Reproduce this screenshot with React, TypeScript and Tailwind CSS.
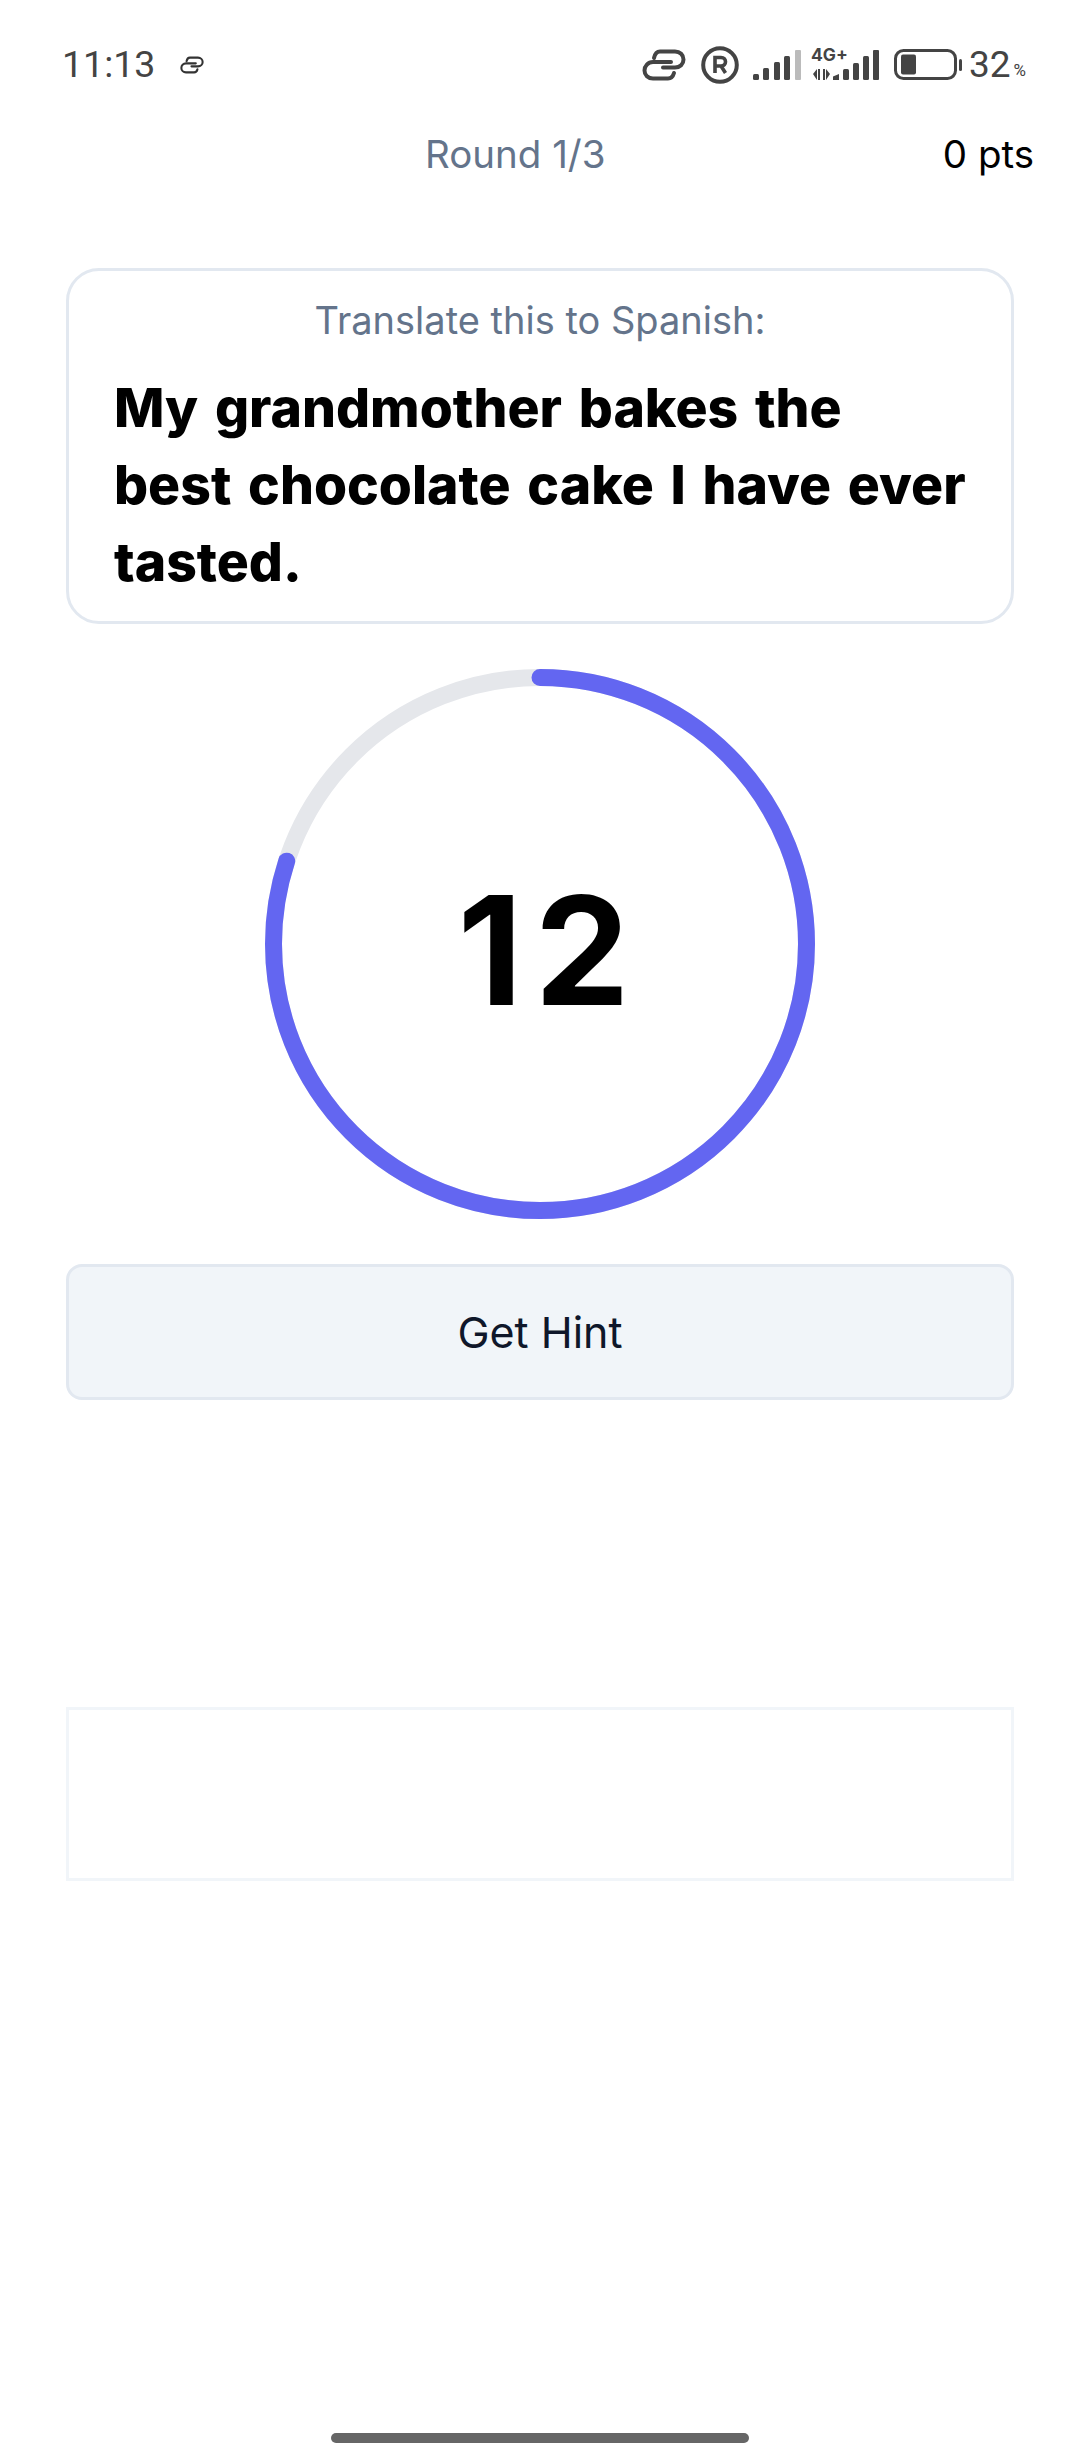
const linkTop = "M12 9 C13 4.5 15 2.5 18 2.5 H33 C38 2.5 41.5 6 41.5 10.5 C41.5 15 38 18.5 33 18.5 H21";
const linkBottom = "M29 13 H11 C6 13 2.5 17 2.5 21.5 C2.5 26 6 29.5 11 29.5 H26 C29 29.5 31 27.5 32 24";

export default function App() {
  return (
    <div className="w-[1080px] h-[2460px] bg-white flex flex-col overflow-hidden font-['Inter',sans-serif]">
      <div className="h-[112px] shrink-0 flex items-center pt-[17px] pl-[62px] pr-[54px] text-[#444444] font-['Roboto',sans-serif]">
        <span className="text-[37.5px] leading-none">11:13</span>
        <svg className="ml-[25px]" width="24" height="18" viewBox="0 0 44 32" fill="none" stroke="#333333" strokeWidth="3.8" strokeLinecap="round">
          <path d={linkTop} />
          <path d={linkBottom} />
        </svg>
        <div className="ml-auto flex items-center">
          <svg width="44" height="32" viewBox="0 0 44 32" fill="none" stroke="#444444" strokeWidth="4" strokeLinecap="round">
            <path d={linkTop} />
            <path d={linkBottom} />
          </svg>
          <svg className="ml-[15px]" width="38" height="38" viewBox="0 0 38 38" fill="none" stroke="#444444">
            <circle cx="19" cy="19" r="16.8" strokeWidth="4" />
            <path d="M14 27 V11.5 H20 C26 11.5 26 20 20 20 H14 M20 20 L24.5 27" strokeWidth="3.6" />
          </svg>
          <svg className="ml-[14px]" width="48" height="30" viewBox="0 0 48 30" fill="#444444">
            <rect x="0" y="24" width="6" height="6" rx="1.5" />
            <rect x="10" y="18" width="6" height="12" rx="1.5" />
            <rect x="21" y="12" width="6" height="18" rx="1.5" />
            <rect x="31" y="6" width="6" height="24" rx="1.5" />
            <rect x="42" y="0" width="6" height="30" rx="1" fill="#bbbbbb" />
          </svg>
          <div className="ml-[10px] relative w-[68px] h-[32px]">
            <span className="absolute left-0 top-[-4px] text-[17.5px] leading-[20px] font-bold font-['Inter',sans-serif]">4G+</span>
            <svg className="absolute left-0 top-0" width="68" height="32" viewBox="0 0 68 32" fill="#444444">
              <path d="M2 25 L6 20 V31 Z M7 20 H9 V31 H7 Z M12 20 H14 V31 H12 Z M15 20 L19 25 L15 31 Z" />
              <path d="M22 31 V27.5 L28 25 V31 Z" />
              <rect x="32" y="20" width="6" height="11" rx="1.5" />
              <rect x="42" y="14" width="6" height="17" rx="1.5" />
              <rect x="52" y="7" width="6" height="24" rx="1.5" />
              <rect x="62" y="1" width="6" height="30" rx="1" />
            </svg>
          </div>
          <svg className="ml-[15px]" width="68" height="32" viewBox="0 0 68 32" fill="none">
            <rect x="1.5" y="1.5" width="60" height="28" rx="8" stroke="#444444" strokeWidth="3" />
            <rect x="7" y="5.5" width="15" height="20" rx="2" fill="#444444" />
            <rect x="65" y="10" width="3" height="12" rx="1.5" fill="#444444" />
          </svg>
          <span className="ml-[7px] text-[37px] leading-none">32</span>
          <span className="ml-[3px] mt-[12px] text-[17px] leading-none">%</span>
        </div>
      </div>

      <div className="h-[84px] shrink-0 flex items-center pl-[425px] pr-[46px] text-[38.5px] leading-none">
        <span className="text-[#64748b]">Round 1/3</span>
        <span className="ml-auto text-black">0 pts</span>
      </div>

      <div className="mt-[72px] mx-[66px] w-[948px] h-[356px] shrink-0 rounded-[33px] border-[3px] border-[#e2e8f0] flex flex-col pl-[45px] pr-[40px]">
        <p className="mt-[24px] text-center pr-[5px] text-[38px] leading-[50px] text-[#64748b]">Translate this to Spanish:</p>
        <p className="mt-[24px] text-[53.5px] leading-[77px] font-extrabold text-black [word-spacing:5px]">
          My grandmother bakes the best chocolate cake I have ever tasted.
        </p>
      </div>

      <div className="mt-[45px] shrink-0 self-center relative w-[550px] h-[550px] flex items-center justify-center pt-[12px]">
        <svg className="absolute inset-0 -rotate-90" width="550" height="550" viewBox="0 0 550 550" fill="none" strokeWidth="17">
          <circle cx="275" cy="275" r="266.5" stroke="#e5e7eb" />
          <circle cx="275" cy="275" r="266.5" stroke="#6366f1" strokeLinecap="round" strokeDasharray="1339.6 1674.5" />
        </svg>
        <span className="pl-[19px] text-[151px] leading-none font-bold tracking-[12px] text-black">12</span>
      </div>

      <button className="mt-[45px] mx-[66px] w-[948px] h-[136px] shrink-0 rounded-[16px] border-[3px] border-[#e2e8f0] bg-[#f1f5f9] text-[43px] text-[#0f172a]">
        Get Hint
      </button>

      <div className="mt-[307px] mx-[66px] w-[948px] h-[174px] shrink-0 border-[3px] border-[#f1f5f9]" />

      <div className="mt-[552px] w-[418px] h-[10px] shrink-0 self-center rounded-full bg-[#666666]" />
    </div>
  );
}
